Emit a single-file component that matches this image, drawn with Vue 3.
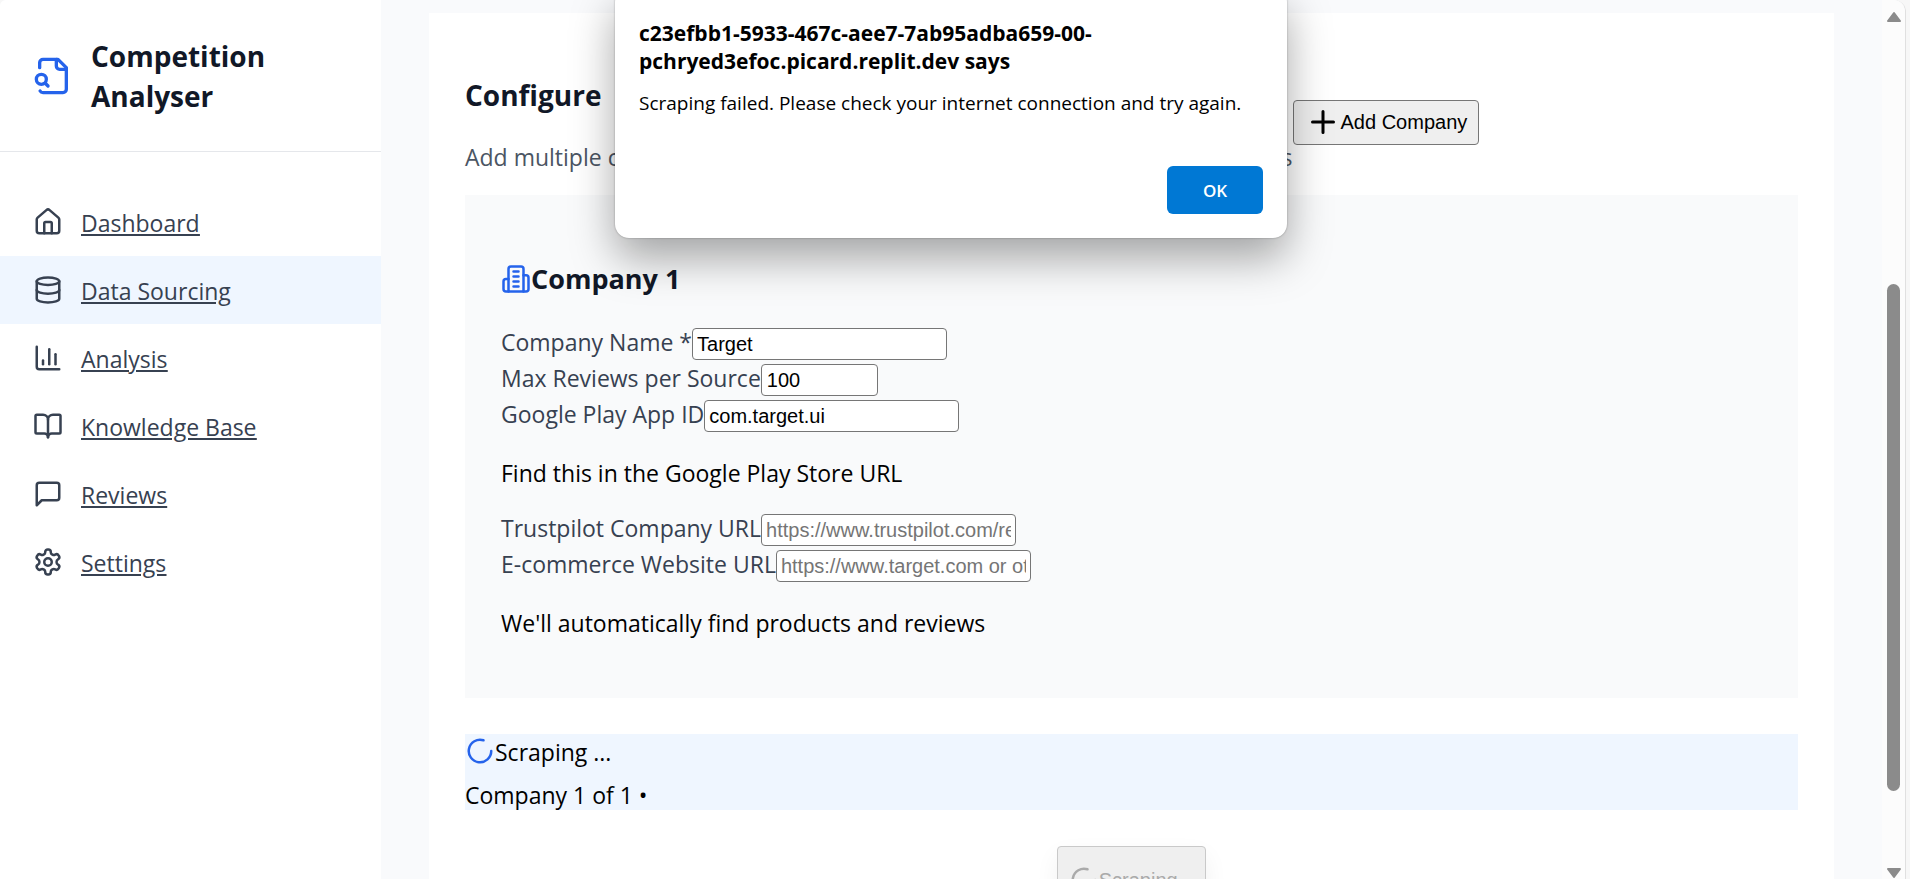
<script setup>
import { ref } from 'vue'

const navItems = [
  {
    label: 'Dashboard',
    paths: [
      'M15 21v-8a1 1 0 0 0-1-1h-4a1 1 0 0 0-1 1v8',
      'M3 10a2 2 0 0 1 .709-1.528l7-5.999a2 2 0 0 1 2.582 0l7 5.999A2 2 0 0 1 21 10v9a2 2 0 0 1-2 2H5a2 2 0 0 1-2-2z'
    ]
  },
  {
    label: 'Data Sourcing',
    active: true,
    paths: [
      'M3 5a9 3 0 1 0 18 0a9 3 0 1 0-18 0',
      'M3 5v14a9 3 0 0 0 18 0V5',
      'M3 12a9 3 0 0 0 18 0'
    ]
  },
  { label: 'Analysis', paths: ['M3 3v16a2 2 0 0 0 2 2h16', 'M18 17V9', 'M13 17V5', 'M8 17v-3'] },
  {
    label: 'Knowledge Base',
    paths: [
      'M12 7v14',
      'M3 18a1 1 0 0 1-1-1V4a1 1 0 0 1 1-1h5a4 4 0 0 1 4 4 4 4 0 0 1 4-4h5a1 1 0 0 1 1 1v13a1 1 0 0 1-1 1h-6a3 3 0 0 0-3 3 3 3 0 0 0-3-3z'
    ]
  },
  { label: 'Reviews', paths: ['M21 15a2 2 0 0 1-2 2H7l-4 4V5a2 2 0 0 1 2-2h14a2 2 0 0 1 2 2z'] },
  {
    label: 'Settings',
    paths: [
      'M12.22 2h-.44a2 2 0 0 0-2 2v.18a2 2 0 0 1-1 1.73l-.43.25a2 2 0 0 1-2 0l-.15-.08a2 2 0 0 0-2.73.73l-.22.38a2 2 0 0 0 .73 2.73l.15.1a2 2 0 0 1 1 1.72v.51a2 2 0 0 1-1 1.74l-.15.09a2 2 0 0 0-.73 2.73l.22.38a2 2 0 0 0 2.73.73l.15-.08a2 2 0 0 1 2 0l.43.25a2 2 0 0 1 1 1.73V20a2 2 0 0 0 2 2h.44a2 2 0 0 0 2-2v-.18a2 2 0 0 1 1-1.73l.43-.25a2 2 0 0 1 2 0l.15.08a2 2 0 0 0 2.73-.73l.22-.39a2 2 0 0 0-.73-2.73l-.15-.08a2 2 0 0 1-1-1.74v-.5a2 2 0 0 1 1-1.74l.15-.09a2 2 0 0 0 .73-2.73l-.22-.38a2 2 0 0 0-2.73-.73l-.15.08a2 2 0 0 1-2 0l-.43-.25a2 2 0 0 1-1-1.73V4a2 2 0 0 0-2-2z',
      'M9 12a3 3 0 1 0 6 0a3 3 0 1 0-6 0'
    ]
  }
]

const company = ref({ name: 'Target', maxReviews: '100', playId: 'com.target.ui', trustpilot: '', website: '' })
const dialogOpen = ref(true)
</script>

<template>
  <div class="window">
    <div class="page">
      <aside class="sidebar">
        <div class="brand">
          <svg class="icon brand-icon" viewBox="0 0 24 24" aria-hidden="true">
            <path d="M14 2v4a2 2 0 0 0 2 2h4" />
            <path d="M4.268 21a2 2 0 0 0 1.727 1H18a2 2 0 0 0 2-2V7l-5-5H6a2 2 0 0 0-2 2v3" />
            <path d="m9 18-1.5-1.5" />
            <circle cx="5" cy="14" r="3" />
          </svg>
          <h1>Competition Analyser</h1>
        </div>
        <nav>
          <a v-for="item in navItems" :key="item.label" href="#" :class="{ active: item.active }">
            <svg class="icon" viewBox="0 0 24 24" aria-hidden="true">
              <path v-for="d in item.paths" :key="d" :d="d" />
            </svg>
            <span>{{ item.label }}</span>
          </a>
        </nav>
      </aside>

      <main>
        <section class="card">
          <header class="card-header">
            <div>
              <h2>Configure</h2>
              <p>Add multiple companies to analyze and compare reviews across data sources</p>
            </div>
            <button type="button" class="add">
              <svg class="icon" viewBox="0 0 24 24" aria-hidden="true"><path d="M5 12h14M12 5v14" /></svg>
              Add Company
            </button>
          </header>

          <form class="company" @submit.prevent>
            <h3>
              <svg class="icon" viewBox="0 0 24 24" aria-hidden="true">
                <path d="M6 22V4a2 2 0 0 1 2-2h8a2 2 0 0 1 2 2v18Z" />
                <path d="M6 12H4a2 2 0 0 0-2 2v6a2 2 0 0 0 2 2h2" />
                <path d="M18 9h2a2 2 0 0 1 2 2v9a2 2 0 0 1-2 2h-2" />
                <path d="M10 6h4M10 10h4M10 14h4M10 18h4" />
              </svg>Company 1
            </h3>
            <div class="field">
              <label for="name">Company Name *</label>
              <input id="name" v-model="company.name" type="text">
            </div>
            <div class="field">
              <label for="max">Max Reviews per Source</label>
              <input id="max" v-model="company.maxReviews" class="number" type="number">
            </div>
            <div class="field">
              <label for="play">Google Play App ID</label>
              <input id="play" v-model="company.playId" type="text">
            </div>
            <p>Find this in the Google Play Store URL</p>
            <div class="field">
              <label for="trust">Trustpilot Company URL</label>
              <input id="trust" v-model="company.trustpilot" type="text" placeholder="https://www.trustpilot.com/review/target.com">
            </div>
            <div class="field">
              <label for="site">E-commerce Website URL</label>
              <input id="site" v-model="company.website" type="text" placeholder="https://www.target.com or other site">
            </div>
            <p>We'll automatically find products and reviews</p>
          </form>

          <div class="progress" role="status">
            <div class="progress-title">
              <svg class="icon" viewBox="0 0 24 24" aria-hidden="true"><path d="M21 12a9 9 0 1 1-6.219-8.56" /></svg>
              <span>Scraping ...</span>
            </div>
            <div class="progress-step">Company 1 of 1 •</div>
          </div>

          <div class="actions">
            <button type="button" class="scrape" disabled>
              <svg class="icon" viewBox="0 0 24 24" aria-hidden="true"><path d="M21 12a9 9 0 1 1-6.219-8.56" /></svg>
              Scraping...
            </button>
          </div>
        </section>
      </main>

      <div class="scrollbar" aria-hidden="true">
        <svg viewBox="0 0 16 12"><path d="M8 2L14 10H2Z" /></svg>
        <div class="track"><div class="thumb"></div></div>
        <svg viewBox="0 0 16 12"><path d="M8 10L14 2H2Z" /></svg>
      </div>
    </div>

    <div v-if="dialogOpen" class="dialog" role="alertdialog" aria-labelledby="dialog-title" aria-describedby="dialog-text">
      <h2 id="dialog-title">c23efbb1-5933-467c-aee7-7ab95adba659-00-<br>pchryed3efoc.picard.replit.dev says</h2>
      <p id="dialog-text">Scraping failed. Please check your internet connection and try again.</p>
      <button type="button" @click="dialogOpen = false">OK</button>
    </div>
  </div>
</template>

<style>
html,
body {
  overflow: hidden;
}
</style>

<style scoped>
* {
  box-sizing: border-box;
}

.window {
  position: relative;
  height: 100vh;
  overflow: hidden;
  padding-right: 4px;
  background: #f7f7f7;
  font-family: "Open Sans", "Noto Sans", sans-serif;
  font-size: 23px;
  line-height: 32px;
  color: #000;
}

.page {
  display: flex;
  height: 100%;
  overflow: hidden;
  background: #f9fafc;
  border-right: 1px solid #e0e0e0;
  border-radius: 6px 12px 0 0;
}

h1,
h2,
h3,
p {
  margin: 0;
}

.icon {
  flex: none;
  width: 30px;
  height: 30px;
  fill: none;
  stroke: currentColor;
  stroke-width: 2;
  stroke-linecap: round;
  stroke-linejoin: round;
}

.sidebar {
  flex: none;
  width: 381px;
  background: #fff;
}

.brand {
  display: flex;
  align-items: center;
  gap: 18px;
  padding: 36px 33px 35px;
  border-bottom: 1px solid #e5e7eb;
}

.brand-icon {
  width: 40px;
  height: 40px;
  color: #2563eb;
}

.brand h1 {
  width: 200px;
  font-size: 28px;
  line-height: 40px;
  color: #111827;
}

nav {
  padding-top: 36px;
}

nav a {
  display: flex;
  gap: 18px;
  padding: 19px 33px 17px;
  color: #374151;
}

.active {
  background: #eff6ff;
}

nav span {
  text-decoration: underline;
}

main {
  flex: 1;
  min-width: 0;
  padding: 13px 48px 0;
}

.card {
  min-height: 100%;
  padding: 36px;
  background: #fff;
}

.card-header {
  display: flex;
  align-items: center;
}

.card-header > div {
  padding: 28px 0 22px;
}

.card-header h2 {
  font-size: 28px;
  line-height: 36px;
  color: #111827;
}

.card-header p {
  margin-top: 28px;
  color: #4b5563;
}

button {
  font-family: "Liberation Sans", Arial, sans-serif;
  font-size: 20px;
  color: #000;
  background: #efefef;
  border: 1px solid #767676;
  border-radius: 4px;
}

.add {
  display: flex;
  align-items: center;
  height: 45px;
  padding: 0 11px;
  white-space: nowrap;
}

.add .icon {
  width: 36px;
  height: 36px;
}

.company {
  padding: 66px 36px 59px;
  background: #f9fafb;
}

.company h3 {
  display: flex;
  align-items: center;
  margin-bottom: 29px;
  font-size: 27px;
  line-height: 36px;
  color: #111827;
}

.company h3 .icon {
  color: #2563eb;
}

.field {
  display: flex;
  align-items: flex-start;
  height: 36px;
}

.field label {
  color: #374151;
}

input {
  width: 255px;
  height: 32px;
  margin: 2px 0 0;
  padding: 0 4px;
  font-family: "Liberation Sans", Arial, sans-serif;
  font-size: 20px;
  color: #000;
  background: #fff;
  border: 1px solid #767676;
  border-radius: 4px;
}

input::placeholder {
  color: #757575;
}

.number {
  width: 117px;
  padding: 0 5px;
  appearance: textfield;
}

.company p {
  margin: 23px 0;
}

.company p:last-child {
  margin-bottom: 0;
}

.progress {
  margin-top: 36px;
  padding-top: 2px;
  background: #eff6ff;
}

.progress-title {
  display: flex;
  padding-bottom: 12px;
}

.progress-title .icon {
  color: #2563eb;
}

.progress-step {
  line-height: 30px;
}

.actions {
  display: flex;
  justify-content: center;
  margin-top: 36px;
}

.scrape {
  display: flex;
  align-items: center;
  padding: 18px 11px;
  color: #aaa;
  border-color: #c9c9c9;
  box-shadow: 0 10px 24px rgba(0, 0, 0, 0.06);
}

.scrollbar {
  display: flex;
  flex: none;
  flex-direction: column;
  align-items: center;
  width: 23px;
  padding-top: 11px;
  background: #fcfcfc;
}

.scrollbar svg {
  width: 16px;
  height: 12px;
  fill: #8b8b8b;
  stroke: #8b8b8b;
  stroke-width: 2;
  stroke-linejoin: round;
}

.track {
  display: flex;
  flex: 1;
  flex-direction: column;
  width: 13px;
}

.track::before {
  content: "";
  flex: 261;
}

.track::after {
  content: "";
  flex: 76;
}

.thumb {
  flex: 507;
  background: #8b8b8b;
  border-radius: 7px;
}

.dialog {
  position: absolute;
  top: -12px;
  left: 50%;
  display: flex;
  flex-direction: column;
  width: 672px;
  margin-left: -340px;
  padding: 31px 24px 24px;
  background: #fff;
  border-radius: 14px;
  box-shadow: 0 0 2px rgba(0, 0, 0, 0.35), 0 20px 44px rgba(0, 0, 0, 0.35);
}

.dialog h2 {
  font-size: 21px;
  line-height: 28px;
}

.dialog p {
  margin: 14px 0 49px;
  font-size: 19px;
  line-height: 28px;
}

.dialog button {
  align-self: flex-end;
  width: 96px;
  height: 48px;
  font-family: "Open Sans", "Noto Sans", sans-serif;
  font-size: 17px;
  font-weight: 600;
  color: #fff;
  background: #0078d4;
  border: 0;
  border-radius: 6px;
}
</style>
